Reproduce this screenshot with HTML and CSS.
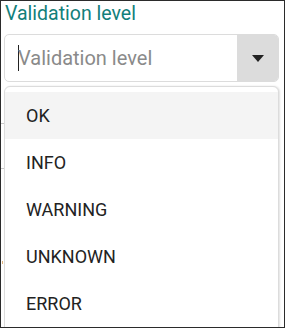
FILE: index.html
```html
<!DOCTYPE html>
<html>
<head>
<meta charset="utf-8">
<link rel="stylesheet" href="styles.css">
</head>
<body>
<div class="frame">
  <label class="label">Validation level</label>
  <div class="select">
    <div class="input"><span class="caret"></span><span class="placeholder">Validation level</span></div>
    <div class="toggle"><svg width="12" height="7" viewBox="0 0 12 7"><path d="M0 0h12L6 7z" fill="#222"/></svg></div>
  </div>
  <div class="bline b1"></div>
  <div class="bline b2"></div>
  <div class="bdot"></div>
  <ul class="menu">
    <li class="item active">OK</li>
    <li class="item">INFO</li>
    <li class="item">WARNING</li>
    <li class="item">UNKNOWN</li>
    <li class="item">ERROR</li>
  </ul>
</div>
</body>
</html>
```
FILE: styles.css
```css
* { box-sizing: border-box; }
html, body { margin: 0; padding: 0; background: #fff; }
body { font-family: Roboto, "Noto Sans", sans-serif; }
.frame {
  width: 285px;
  height: 328px;
  border: 1px solid #2b2b2b;
  overflow: hidden;
  position: relative;
  padding: 1px 5px 0 3px;
}
.label {
  display: block;
  color: #12807a;
  font-size: 19.5px;
  line-height: 24px;
  padding-left: 1px;
  margin-bottom: 8px;
}
.select {
  display: flex;
  height: 48px;
  border: 1px solid #dcdcdc;
  border-radius: 5px;
  overflow: hidden;
}
.input {
  flex: 1;
  display: flex;
  align-items: center;
  padding-left: 13px;
}
.caret {
  width: 1px;
  height: 26px;
  background: #222;
  margin-right: -1px;
}
.placeholder {
  color: #8a8a8a;
  font-size: 20px;
}
.toggle {
  width: 41px;
  background: #dcdcdc;
  display: flex;
  align-items: center;
  justify-content: center;
}
.bline {
  position: absolute;
  left: 0;
  width: 3px;
  height: 1px;
  background: #c8c8c8;
}
.b1 { top: 122px; }
.b2 { top: 167px; }
.bdot {
  position: absolute;
  left: 1px;
  top: 260px;
  width: 1px;
  height: 3px;
  background: #e0b27a;
}
.menu {
  position: relative;
  list-style: none;
  margin: 4px 0 0 0;
  padding: 5px 0 0 0;
  border: 1px solid #dcdcdc;
  border-radius: 6px;
  box-shadow: 1px 0 2px rgba(0,0,0,0.12);
  background: #fff;
  height: 260px;
}
.item {
  height: 47px;
  display: flex;
  align-items: center;
  padding-left: 21px;
  padding-bottom: 1px;
  color: #222;
  font-size: 18px;
}
.item.active { background: #f4f4f4; }
```
